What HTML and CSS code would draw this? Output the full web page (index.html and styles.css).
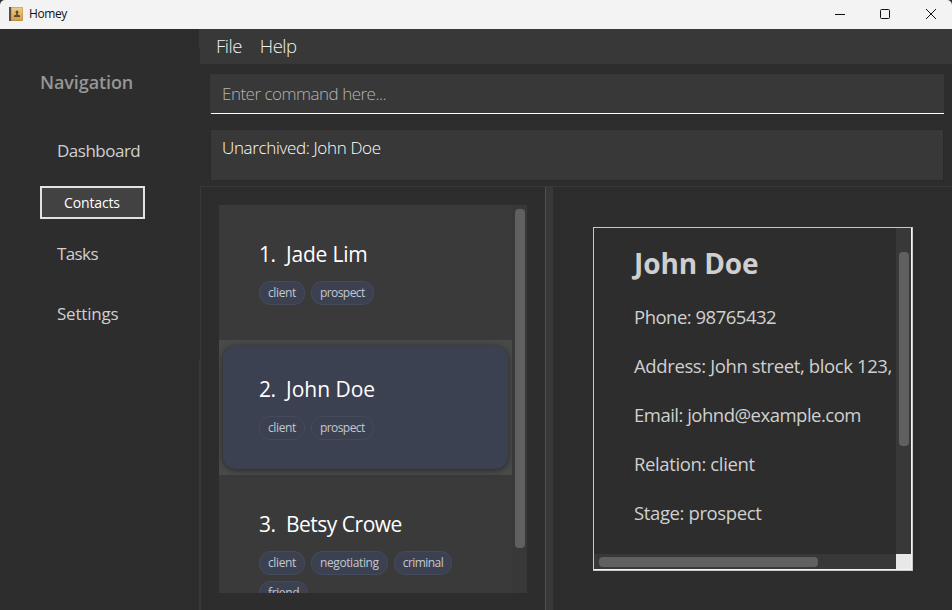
FILE: index.html
```html
<!DOCTYPE html>
<html lang="en">
<head>
<meta charset="utf-8">
<title>Homey</title>
<link rel="stylesheet" href="styles.css">
</head>
<body>
<header class="titlebar">
  <svg class="app-icon" width="14" height="14" viewBox="0 0 14 14">
    <defs><linearGradient id="cover" x1="0" y1="0" x2="0" y2="1"><stop offset="0" stop-color="#e9cb92"/><stop offset="1" stop-color="#d7a03c"/></linearGradient></defs>
    <rect width="14" height="14" rx="1" fill="#b98d4c"/>
    <rect x="2.5" y="0.5" width="11" height="12.5" fill="url(#cover)"/>
    <rect width="2" height="14" fill="#594b45"/>
    <path d="M8 3.500a1.500 1.500 0 0 1 1 2.600L8.700 7.400L11 8.500V10H5V8.500L7.300 7.400L7 6.100A1.500 1.500 0 0 1 8 3.500z" fill="#5c4a30"/>
  </svg>
  <span class="app-name">Homey</span>
  <svg class="window-controls" width="104" height="12" viewBox="0 0 104 12" fill="none" stroke="#111">
    <path d="M1 6.500H11"/>
    <rect x="46.500" y="1.500" width="9" height="9" rx="1"/>
    <path d="M92 1L102 11M102 1L92 11"/>
  </svg>
</header>
<div class="shell">
  <nav class="sidebar">
    <h2 class="nav-title"><span>Navigation</span></h2>
    <a class="nav-item dashboard">Dashboard</a>
    <div class="nav-active"><button class="nav-button">Contacts</button></div>
    <a class="nav-item tasks">Tasks</a>
    <a class="nav-item settings">Settings</a>
  </nav>
  <main class="main">
    <div class="menubar"><span class="file">File</span><span class="help">Help</span></div>
    <div class="command"><span>Enter command here...</span></div>
    <div class="result"><span>Unarchived: John Doe</span></div>
    <div class="panes">
      <section class="list-pane">
        <div class="list">
          <div class="cells">
            <article class="cell">
              <h3 class="person"><span class="num">1.</span><span class="jade">Jade Lim</span></h3>
              <div class="tags"><span class="tag">client</span><span class="tag tight">prospect</span></div>
            </article>
            <article class="cell selected">
              <h3 class="person"><span class="num">2.</span><span class="john">John Doe</span></h3>
              <div class="tags"><span class="tag">client</span><span class="tag tight">prospect</span></div>
            </article>
            <article class="cell">
              <h3 class="person"><span class="num">3.</span><span class="betsy">Betsy Crowe</span></h3>
              <div class="tags"><span class="tag">client</span><span class="tag">negotiating</span><span class="tag tight">criminal</span><span class="tag">friend</span></div>
            </article>
          </div>
          <div class="list-track"><div class="list-thumb"></div></div>
        </div>
      </section>
      <div class="divider"></div>
      <section class="detail-pane">
        <div class="detail">
          <div class="detail-body">
            <h1 class="detail-name"><span>John Doe</span></h1>
            <p><span class="phone">Phone: 98765432</span></p>
            <p><span class="address">Address: John street, block 123,</span></p>
            <p><span class="email">Email: johnd@example.com</span></p>
            <p><span class="relation">Relation: client</span></p>
            <p><span class="stage">Stage: prospect</span></p>
          </div>
          <div class="v-track"><div class="v-thumb"></div></div>
          <div class="h-track"><div class="h-thumb"></div></div>
          <div class="corner"></div>
        </div>
      </section>
    </div>
  </main>
</div>
</body>
</html>
```
FILE: styles.css
```css
* { box-sizing: border-box; }
body {
  margin: 0;
  width: 952px;
  height: 610px;
  overflow: hidden;
  display: flex;
  flex-direction: column;
  background: #2d2d2d;
  color: #d0d0d0;
  font-family: "Open Sans", "Noto Sans", sans-serif;
  white-space: nowrap;
}
h1, h2, h3, p { margin: 0; font-weight: 400; }

.titlebar {
  flex: none;
  height: 29px;
  padding: 0 14px 2px 9px;
  display: flex;
  align-items: center;
  background: #f3f3f3;
  color: #111;
  font-size: 12px;
  border-radius: 5px 5px 0 0;
}
.app-name { margin-left: 6px; letter-spacing: -0.4px; }
.window-controls { margin-left: auto; }

.shell { flex: 1; min-height: 0; display: flex; }

.sidebar {
  flex: none;
  width: 200px;
  padding: 38px 0 0 40px;
  background: linear-gradient(#383838, #383838) 199px 0 / 1px 20px no-repeat,
    linear-gradient(#383838, #383838) 199px 330px / 1px 251px no-repeat;
}
.nav-title { height: 54px; line-height: 31px; font-size: 18px; font-weight: 600; color: #969696; letter-spacing: -0.1px; }
.nav-item { display: block; height: 60px; padding-left: 17px; line-height: 60px; font-size: 17px; color: #d0d0d0; }
.dashboard { letter-spacing: -0.5px; }
.tasks { letter-spacing: -0.6px; }
.settings { letter-spacing: -0.2px; }
.nav-active { height: 43px; display: flex; align-items: center; }
.nav-button {
  width: 105px;
  height: 33px;
  padding: 0 1px 0 0;
  border: 2px solid #e2e2e2;
  background: #424242;
  color: #fff;
  font: 400 14px/28px "Open Sans", sans-serif;
  letter-spacing: -0.15px;
}

.main { flex: 1; min-width: 0; display: flex; flex-direction: column; font-weight: 300; }
.menubar { flex: none; height: 35px; padding-left: 16px; display: flex; gap: 18px; line-height: 33px; font-size: 18.5px; letter-spacing: -0.5px; background: #383838; color: #f0f0f0; }
.command {
  flex: none;
  height: 40px;
  margin: 10px 8px 0 10px;
  padding-left: 12px;
  line-height: 40px;
  font-size: 17px;
  letter-spacing: -0.5px;
  color: #b4b4b4;
  background: linear-gradient(#fff, #fff) 1px 100% / 100% 1px no-repeat, #383838;
}
.result {
  flex: none;
  height: 50px;
  margin: 16px 9px 6px 11px;
  padding-left: 11px;
  line-height: 36px;
  font-size: 17px;
  letter-spacing: -0.34px;
  color: #fff;
  background: #383838;
  box-shadow: 0 0 0 1px #2a2a2a;
}

.panes { flex: 1; min-height: 0; display: flex; border-top: 1px solid #393939; border-left: 1px solid #393939; }
.list-pane { flex: none; width: 344px; padding: 18px; }
.list { width: 308px; height: 388px; display: flex; background: #383838; }
.cells { width: 293px; overflow: hidden; }
.cell { height: 135px; padding: 33px 40px 0; background: #3a3a3a; }
.cell.selected { position: relative; z-index: 0; background: #4a4a4a; }
.cell.selected::before {
  content: "";
  position: absolute;
  z-index: -1;
  inset: 6px 4px;
  border-radius: 13px;
  background: #3c4151;
  box-shadow: 0 1px 6px rgba(0, 0, 0, 0.5);
}
.person { display: flex; height: 43px; line-height: 33px; font-size: 21px; color: #fff; }
.num { width: 27px; letter-spacing: -0.5px; }
.jade { letter-spacing: -0.2px; }
.betsy { letter-spacing: -0.5px; }
.tags { display: flex; flex-wrap: wrap; gap: 6px; }
.tag { height: 24px; padding: 0 8px; border: 1px solid #454a5a; border-radius: 11px; background: #3c4151; color: #c4c7ce; font-size: 12px; line-height: 21px; letter-spacing: -0.38px; font-weight: 400; }
.tag.tight { letter-spacing: -0.56px; }
.list-track { width: 15px; padding: 4px 2px 0 3px; }
.list-thumb { height: 339px; border-radius: 4px; background: #606060; }

.divider { flex: none; width: 8px; border-left: 1px solid #505050; background: #383838; }

.detail-pane { flex: 1; padding: 40px 39px 39px 40px; }
.detail {
  width: 320px;
  height: 344px;
  display: grid;
  grid-template: 326px 15px / 302px 15px;
  border: 1px solid #c8c8c8;
  box-shadow: inset -1px -1px #f4f4f4;
}
.detail-body { overflow: hidden; padding: 11px 0 0 40px; }
.detail-name { height: 53px; line-height: 48px; font-size: 28px; font-weight: 700; letter-spacing: -0.1px; color: #cfcfcf; }
.detail-body p { height: 49px; line-height: 49px; font-size: 18.5px; letter-spacing: -0.38px; }
.detail-body .phone, .detail-body .email { letter-spacing: -0.5px; }
.v-track { background: #383838; padding: 24px 2px 0 3px; }
.v-thumb { height: 194px; border-radius: 4px; background: #606060; }
.h-track { background: #383838; padding: 3px 0 2px 5px; }
.h-thumb { width: 219px; height: 10px; border-radius: 4px; background: #606060; }
.corner { background: #e8e8e8; }
```
